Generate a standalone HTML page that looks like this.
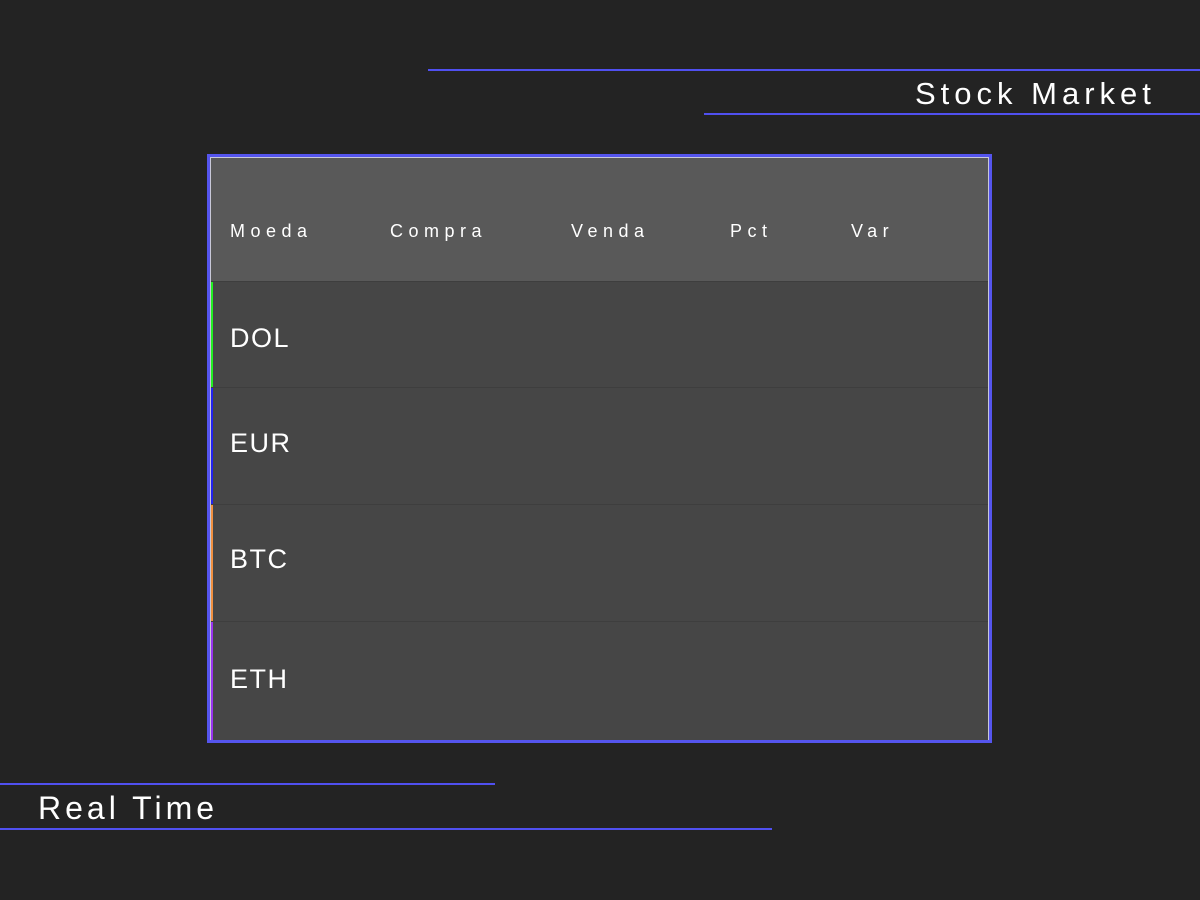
<!DOCTYPE html>
<html><head><meta charset="utf-8"><style>
html,body{margin:0;padding:0;}
body{width:1200px;height:900px;background:#232323;position:relative;overflow:hidden;font-family:"Liberation Sans",sans-serif;color:#fff;}
.line{position:absolute;height:2px;background:#5050f0;}
.t{position:absolute;white-space:nowrap;line-height:1;}
.box{position:absolute;left:207px;top:154px;width:779px;height:583px;border:3px solid #5555ee;}
.inner{position:absolute;left:0;top:0;right:0;bottom:0;border:1px solid #c8c8d8;background:#464646;}
.hdr{position:absolute;left:0;top:0;width:777px;height:123px;background:#595959;}
.row{position:absolute;left:0;width:777px;background:#464646;border-top:1px solid #3e3e3e;}
.bar{position:absolute;left:0;top:0;bottom:0;width:2px;}
.h{position:absolute;top:63px;font-size:18px;letter-spacing:5.5px;}
.c{position:absolute;left:19px;font-size:27px;letter-spacing:1.5px;}
</style></head><body>
<div class="line" style="left:428px;top:69px;width:772px"></div>
<div class="line" style="left:704px;top:113px;width:496px"></div>
<div class="t" style="left:915px;top:78px;font-size:31px;letter-spacing:5px">Stock Market</div>
<div class="box"><div class="inner">
<div class="hdr">
<div class="h" style="left:19px">Moeda</div>
<div class="h" style="left:179px">Compra</div>
<div class="h" style="left:360px">Venda</div>
<div class="h" style="left:519px">Pct</div>
<div class="h" style="left:640px">Var</div>
</div>
<div class="row" style="top:123px;height:105px"><div class="bar" style="background:#22ee22"></div><div class="c" style="top:41px">DOL</div></div>
<div class="row" style="top:229px;height:116px"><div class="bar" style="background:#2222ee"></div><div class="c" style="top:40px">EUR</div></div>
<div class="row" style="top:346px;height:116px"><div class="bar" style="background:#f09040"></div><div class="c" style="top:39px">BTC</div></div>
<div class="row" style="top:463px;height:118px"><div class="bar" style="background:#9933ee"></div><div class="c" style="top:42px">ETH</div></div>
</div></div>
<div class="line" style="left:0;top:783px;width:495px"></div>
<div class="line" style="left:0;top:828px;width:772px"></div>
<div class="t" style="left:38px;top:792px;font-size:32px;letter-spacing:4px">Real Time</div>
</body></html>
